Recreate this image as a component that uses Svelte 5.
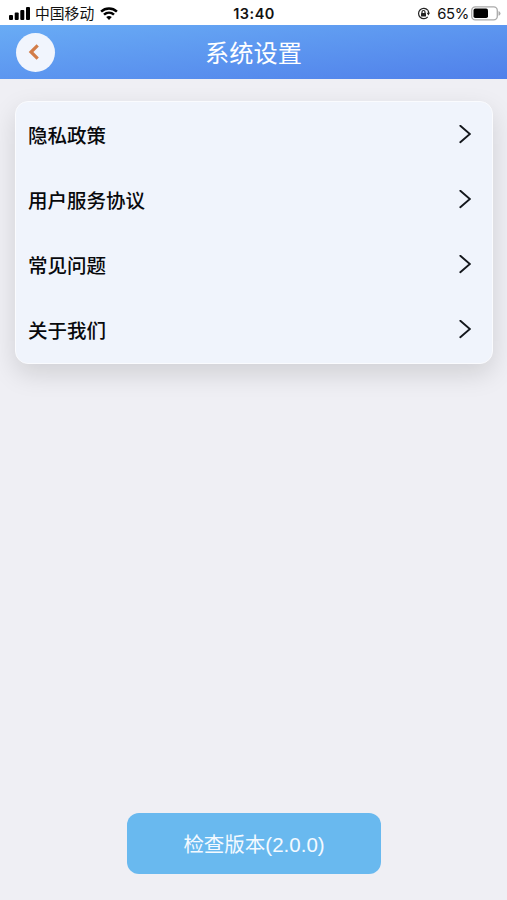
<div class="screen">
  <div class="status">
    <div class="side">
      <svg class="signal" width="21" height="13" viewBox="0 0 21 13">
        {#each bars as bar}
          <rect x={bar.x} y={13 - bar.height} width="4" height={bar.height} rx="1" />
        {/each}
      </svg>
      <span class="carrier">中国移动</span>
      <svg class="wifi" width="18" height="13" viewBox="0 0 18 13">
        <path d="M1.1 4.7C5.6 .5 12.4 .5 16.9 4.7" />
        <path d="M4 7.7C6.9 5 11.1 5 14 7.7" />
        <path class="dot" d="M9 13L6.2 10.1Q9 7.7 11.8 10.1Z" />
      </svg>
    </div>
    <span class="time">13:40</span>
    <div class="side right">
      <svg class="lock" width="13" height="13" viewBox="0 0 13 13">
        <path d="M10.7 3.1A5.2 5.2 0 1 0 10.7 9.9" />
        <path d="M10.7 3.1Q11.7 4.5 11.7 6" />
        <path class="fill" d="M9.7 5.8H13L11.4 8.4Z" />
        <rect class="fill" x="4" y="6" width="5" height="3.4" rx=".5" />
        <path d="M5 6.2V5a1.5 1.5 0 0 1 3 0V6.2" />
      </svg>
      <span class="percent">65%</span>
      <svg class="battery" width="30" height="15" viewBox="0 0 30 15">
        <rect class="case" x=".7" y=".8" width="25.6" height="13.1" rx="3.6" />
        <rect x="2.5" y="2.6" width="14.5" height="9.5" rx="1.8" />
        <path class="cap" d="M27.5 5Q29.5 5.8 29.5 7.4T27.5 9.8Z" />
      </svg>
    </div>
  </div>

  <header>
    <button class="back" aria-label="返回">
      <svg width="12" height="18" viewBox="0 0 12 18">
        <path d="M9.7 2.4L3 9L9.7 15.6" />
      </svg>
    </button>
    <h1>系统设置</h1>
  </header>

  <main>
    <ul>
      {#each items as item}
        <li>
          <span>{item}</span>
          <svg width="12" height="20" viewBox="0 0 12 20">
            <path d="M1.3 .8L10.9 9L1.3 17.2" />
          </svg>
        </li>
      {/each}
    </ul>
    <button class="version">检查版本({version})</button>
  </main>
</div>

<script>
  const version = '2.0.0'

  const items = ['隐私政策', '用户服务协议', '常见问题', '关于我们']

  const bars = [
    { x: 0, height: 5 },
    { x: 5.7, height: 7.5 },
    { x: 11.3, height: 10 },
    { x: 17, height: 13 }
  ]
</script>

<style>
  :global(body) {
    margin: 0;
  }

  .screen {
    display: flex;
    flex-direction: column;
    height: 900px;
    background: #efeff4;
    font-family: "Liberation Sans", "Noto Sans CJK SC", sans-serif;
  }

  .status {
    display: flex;
    align-items: center;
    box-sizing: border-box;
    height: 25px;
    padding: 2px 6px 0 9px;
    background: #fff;
    color: #111;
    line-height: 20px;
  }

  .side {
    display: flex;
    flex: 1;
    align-items: center;
  }

  .right {
    justify-content: flex-end;
  }

  .carrier {
    margin: 0 6px 0 5px;
    font-size: 14.8px;
  }

  .time {
    margin-right: 2px;
    font-family: Inter, sans-serif;
    font-size: 14.5px;
    font-weight: 600;
    letter-spacing: .5px;
  }

  .percent {
    margin: 0 2px 0 7px;
    font-family: Inter, sans-serif;
    font-size: 14.8px;
    letter-spacing: -.3px;
  }

  .wifi path {
    fill: none;
    stroke: #000;
    stroke-width: 2.5;
  }

  .wifi .dot {
    fill: #000;
    stroke: none;
  }

  .lock path {
    fill: none;
    stroke: #222;
    stroke-width: 1.2;
  }

  .lock .fill {
    fill: #222;
    stroke: none;
  }

  .battery .case {
    fill: #fff;
    stroke: #aaa;
    stroke-width: 1.3;
  }

  .battery .cap {
    fill: #aaa;
  }

  header {
    display: grid;
    grid-template-columns: 39px 1fr 39px;
    align-items: center;
    height: 54px;
    padding: 0 16px;
    background: linear-gradient(to bottom right, #69acf5, #5080ea);
  }

  .back {
    display: flex;
    align-items: center;
    justify-content: center;
    width: 39px;
    height: 39px;
    padding: 0 3px 0 0;
    border: 0;
    border-radius: 50%;
    background: #f1f5fd;
  }

  .back path {
    fill: none;
    stroke: #d27c48;
    stroke-width: 3.2;
  }

  h1 {
    margin: 0;
    padding-top: 3px;
    color: #fff;
    font-size: 24.2px;
    font-weight: 400;
    line-height: 36px;
    text-align: center;
  }

  main {
    display: flex;
    flex: 1;
    flex-direction: column;
    align-items: center;
    justify-content: space-between;
    padding: 22px 14px 26px 15px;
  }

  ul {
    box-sizing: border-box;
    width: 100%;
    margin: 0;
    padding: 0 0 1px;
    border: 1px solid #fafbfe;
    border-radius: 13px;
    background: #f0f4fc;
    box-shadow: 0 10px 26px rgba(0, 0, 0, .13);
    list-style: none;
  }

  li {
    display: flex;
    align-items: center;
    justify-content: space-between;
    height: 65px;
    padding: 0 21px 0 12px;
    color: #08090c;
    font-size: 19.5px;
    font-weight: 500;
  }

  li path {
    fill: none;
    stroke: #14171c;
    stroke-width: 1.9;
    stroke-linecap: round;
  }

  .version {
    width: 254px;
    height: 61px;
    padding: 0 0 2px;
    border: 0;
    border-radius: 12px;
    background: #69b9ef;
    color: #f4faff;
    font-family: inherit;
    font-size: 20.5px;
  }
</style>
